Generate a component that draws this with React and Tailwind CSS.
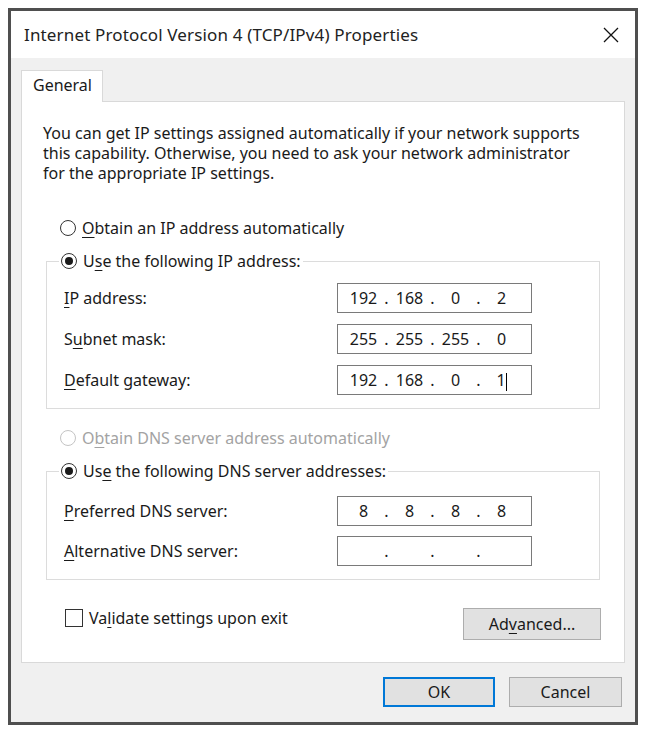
import React from "react";

const font = { fontFamily: '"Noto Sans", "Open Sans", sans-serif' };

function Key({ children }) {
  return <span className="underline decoration-1 underline-offset-[3px]">{children}</span>;
}

function Radio({ checked, disabled }) {
  return (
    <span
      className={`flex items-center justify-center w-[16px] h-[16px] rounded-full border bg-white shrink-0 ${
        disabled ? "border-[#c4c4c4]" : "border-[#333333]"
      }`}
    >
      {checked && <span className="w-[8px] h-[8px] rounded-full bg-[#1a1a1a]" />}
    </span>
  );
}

function IpField({ parts }) {
  return (
    <div className="flex items-center w-[195px] h-[30px] border border-[#7a7a7a] bg-white pl-[9px] text-[#1a1a1a]">
      {parts.map((p, i) => (
        <React.Fragment key={i}>
          <span className="w-[33px] text-center">{p}</span>
          {i < 3 && <span className="w-[13px] text-center">.</span>}
        </React.Fragment>
      ))}
    </div>
  );
}

function Row({ label, parts }) {
  return (
    <div className="flex items-center justify-between pr-[67px]">
      <span>{label}</span>
      <IpField parts={parts} />
    </div>
  );
}

export default function App() {
  return (
    <div className="w-[650px] h-[739px] bg-white pt-[8px] pl-[8px] text-[16px] text-[#1a1a1a]" style={font}>
      <div className="w-[630px] h-[717px] border-[3px] border-[#4f4f4f] flex flex-col">
        {/* title bar */}
        <div className="h-[47px] bg-white flex items-center justify-between pl-[13px] pr-[16px]">
          <span className="text-[17px] tracking-[0.15px] text-[#222]">Internet Protocol Version 4 (TCP/IPv4) Properties</span>
          <svg width="16" height="16" viewBox="0 0 16 16">
            <path d="M1 1 L15 15 M15 1 L1 15" stroke="#111" strokeWidth="1.3" />
          </svg>
        </div>

        {/* body */}
        <div className="flex-1 bg-[#f0f0f0] px-[10px] pt-[12px]">
          <div className="flex">
            <div className="relative z-10 -mb-px h-[32px] w-[82px] bg-white border border-b-0 border-[#d9d9d9] pl-[11px] pb-[3px] flex items-center">
              General
            </div>
          </div>
          <div className="bg-white border border-[#d9d9d9] h-[562px] pl-[21px] pr-[22px] pt-[21px]">
            <p className="leading-[20px] whitespace-nowrap">
              You can get IP settings assigned automatically if your network supports
              <br />
              this capability. Otherwise, you need to ask your network administrator
              <br />
              for the appropriate IP settings.
            </p>

            <div className="flex items-center gap-[6px] h-[20px] mt-[35px] ml-[17px]">
              <Radio />
              <span>
                <Key>O</Key>btain an IP address automatically
              </span>
            </div>

            <fieldset className="ml-[3px] mr-[2px] mt-[13px] border border-[#dcdcdc] pl-[17px] pb-[13px]">
              <legend className="-ml-[5px] px-[2px] h-[20px] flex items-center gap-[6px] bg-white">
                <Radio checked />
                <span>
                  U<Key>s</Key>e the following IP address:
                </span>
              </legend>
              <div className="flex flex-col gap-[11px] pt-[12px]">
                <Row label={<><Key>I</Key>P address:</>} parts={["192", "168", "0", "2"]} />
                <Row label={<>S<Key>u</Key>bnet mask:</>} parts={["255", "255", "255", "0"]} />
                <Row
                  label={<><Key>D</Key>efault gateway:</>}
                  parts={["192", "168", "0", <span key="c">1<span className="inline-block w-[1px] h-[18px] bg-black align-middle" /></span>]}
                />
              </div>
            </fieldset>

            <div className="flex items-center gap-[6px] h-[20px] mt-[19px] ml-[17px] text-[#a3a3a3]">
              <Radio disabled />
              <span>
                O<Key>b</Key>tain DNS server address automatically
              </span>
            </div>

            <fieldset className="ml-[3px] mr-[2px] mt-[13px] border border-[#dcdcdc] pl-[17px] pb-[13px]">
              <legend className="-ml-[5px] px-[2px] h-[20px] flex items-center gap-[6px] bg-white">
                <Radio checked />
                <span>
                  Us<Key>e</Key> the following DNS server addresses:
                </span>
              </legend>
              <div className="flex flex-col gap-[10px] pt-[15px]">
                <Row label={<><Key>P</Key>referred DNS server:</>} parts={["8", "8", "8", "8"]} />
                <Row label={<><Key>A</Key>lternative DNS server:</>} parts={["", "", "", ""]} />
              </div>
            </fieldset>

            <div className="flex items-start justify-between mt-[28px] ml-[22px] mr-[1px]">
              <div className="flex items-center gap-[6px] h-[20px]">
                <span className="w-[18px] h-[18px] border border-[#333] bg-white" />
                <span>
                  Va<Key>l</Key>idate settings upon exit
                </span>
              </div>
              <button className="w-[138px] h-[32px] bg-[#e1e1e1] border border-[#adadad]">
                Ad<Key>v</Key>anced...
              </button>
            </div>
          </div>

          <div className="flex justify-end gap-[14px] mt-[14px] pr-[3px]">
            <button className="w-[112px] h-[30px] bg-[#e1e1e1] border-2 border-[#0078d7]">OK</button>
            <button className="w-[113px] h-[30px] bg-[#e1e1e1] border border-[#adadad]">Cancel</button>
          </div>
        </div>
      </div>
    </div>
  );
}
